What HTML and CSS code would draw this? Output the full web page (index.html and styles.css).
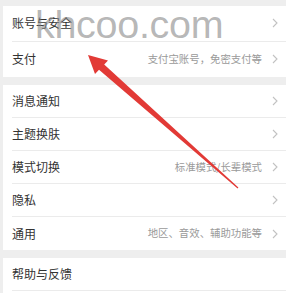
FILE: index.html
```html
<!DOCTYPE html>
<html lang="zh">
<head>
<meta charset="utf-8">
<link rel="stylesheet" href="styles.css">
</head>
<body>
<div class="page">
  <div class="card card-first">
    <div class="row"><span class="label">账号与安全</span><span class="right"><svg class="chev" viewBox="0 0 6 10"><path d="M1 1l4 4-4 4"/></svg></span></div>
    <div class="row"><span class="label">支付</span><span class="right"><span class="hint">支付宝账号，免密支付等</span><svg class="chev" viewBox="0 0 6 10"><path d="M1 1l4 4-4 4"/></svg></span></div>
  </div>
  <div class="card">
    <div class="row"><span class="label">消息通知</span><span class="right"><svg class="chev" viewBox="0 0 6 10"><path d="M1 1l4 4-4 4"/></svg></span></div>
    <div class="row"><span class="label">主题换肤</span><span class="right"><svg class="chev" viewBox="0 0 6 10"><path d="M1 1l4 4-4 4"/></svg></span></div>
    <div class="row"><span class="label">模式切换</span><span class="right"><span class="hint">标准模式/长辈模式</span><svg class="chev" viewBox="0 0 6 10"><path d="M1 1l4 4-4 4"/></svg></span></div>
    <div class="row"><span class="label">隐私</span><span class="right"><svg class="chev" viewBox="0 0 6 10"><path d="M1 1l4 4-4 4"/></svg></span></div>
    <div class="row"><span class="label">通用</span><span class="right"><span class="hint">地区、音效、辅助功能等</span><svg class="chev" viewBox="0 0 6 10"><path d="M1 1l4 4-4 4"/></svg></span></div>
  </div>
  <div class="card card-last">
    <div class="row"><span class="label">帮助与反馈</span><span class="right"></span></div>
  </div>
  <div class="watermark">khcoo.com</div>
  <svg class="arrow" viewBox="0 0 286 293" width="286" height="293">
    <polygon points="88,55 108,60.5 104.2,64.4 238.4,187.6 237.6,188.4 99,69.8 95,74"/>
  </svg>
</div>
</body>
</html>
```
FILE: styles.css
```css
* { box-sizing: border-box; }
html, body { margin: 0; padding: 0; }
body {
  background: #eeeeee;
  font-family: "Noto Sans CJK SC", "Noto Sans", sans-serif;
  width: 286px;
  height: 293px;
  overflow: hidden;
}
.page {
  position: relative;
  padding-top: 6px;
  padding-left: 3px;
  display: flex;
  flex-direction: column;
  gap: 8px;
  height: 293px;
}
.card {
  background: #ffffff;
  display: flex;
  flex-direction: column;
  padding-left: 9px;
}
.card-last { flex: 1; }
.row {
  height: 33px;
  display: flex;
  align-items: center;
  justify-content: space-between;
  padding-right: 8px;
  border-bottom: 1px solid #ebebeb;
}
.card-first .row { height: 35.5px; }
.card:not(.card-last) .row:last-child { border-bottom: none; }
.label {
  font-size: 12px;
  color: #333333;
  line-height: 1;
}
.right {
  display: flex;
  align-items: center;
  gap: 10px;
}
.hint {
  font-size: 10.4px;
  color: #9a9a9a;
  line-height: 1;
}
.chev {
  width: 6px;
  height: 10px;
  fill: none;
  stroke: #c2c2c2;
  stroke-width: 1.1;
}
.watermark {
  position: absolute;
  left: 35px;
  top: 4px;
  font-family: "Liberation Sans", Arial, sans-serif;
  font-size: 39.5px;
  line-height: 40px;
  color: rgba(130, 130, 130, 0.58);
  letter-spacing: -0.3px;
}
.arrow {
  position: absolute;
  left: 0;
  top: 0;
}
.arrow polygon { fill: #e23a36; }
```
